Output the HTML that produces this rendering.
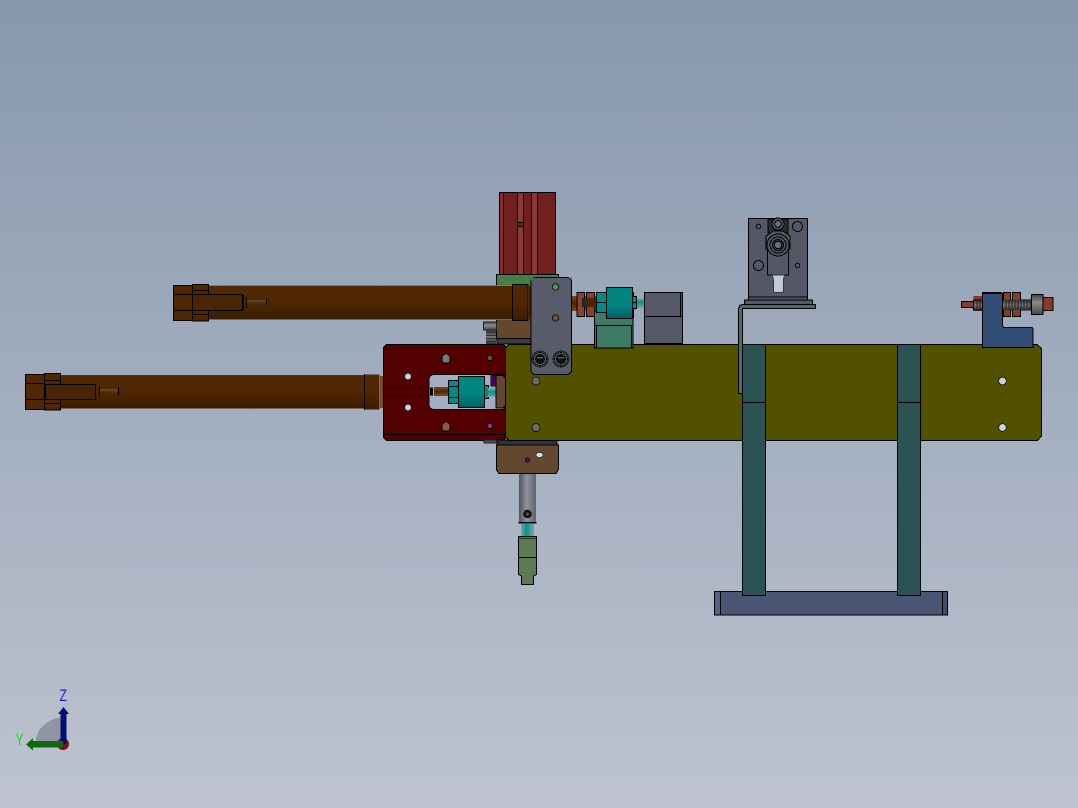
<!DOCTYPE html>
<html><head><meta charset="utf-8"><style>
html,body{margin:0;padding:0;width:1078px;height:808px;overflow:hidden}
svg{display:block}
</style></head><body>
<svg width="1078" height="808" viewBox="0 0 1078 808" xmlns="http://www.w3.org/2000/svg" shape-rendering="crispEdges">
<defs>
<linearGradient id="bg" x1="0" y1="0" x2="0" y2="1"><stop offset="0" stop-color="#8798ac"/><stop offset="0.5" stop-color="#a2aebf"/><stop offset="1" stop-color="#bec3cf"/></linearGradient>
<linearGradient id="tube" x1="0" y1="0" x2="0" y2="1"><stop offset="0" stop-color="#512801"/><stop offset="0.5" stop-color="#4f2702"/><stop offset="1" stop-color="#3b1d03"/></linearGradient>
<linearGradient id="rod" x1="0" y1="0" x2="0" y2="1"><stop offset="0" stop-color="#7d4a20"/><stop offset="0.5" stop-color="#4f2702"/><stop offset="1" stop-color="#7d4a20"/></linearGradient>
<linearGradient id="teal" x1="0" y1="0" x2="0" y2="1"><stop offset="0" stop-color="#008580"/><stop offset="0.55" stop-color="#008580"/><stop offset="1" stop-color="#005f66"/></linearGradient>
<linearGradient id="tealrod" x1="0" y1="0" x2="0" y2="1"><stop offset="0" stop-color="#7fb5b5"/><stop offset="0.4" stop-color="#089090"/><stop offset="1" stop-color="#6fa8a8"/></linearGradient>
<linearGradient id="tealv" x1="0" y1="0" x2="1" y2="0"><stop offset="0" stop-color="#6fa8a8"/><stop offset="0.4" stop-color="#089090"/><stop offset="1" stop-color="#6fa8a8"/></linearGradient>
<linearGradient id="steel" x1="0" y1="0" x2="1" y2="0"><stop offset="0" stop-color="#50525e"/><stop offset="0.45" stop-color="#8f939f"/><stop offset="1" stop-color="#5f626e"/></linearGradient>
<linearGradient id="thread" x1="0" y1="0" x2="0" y2="1"><stop offset="0" stop-color="#333"/><stop offset="0.5" stop-color="#777"/><stop offset="1" stop-color="#333"/></linearGradient>
<linearGradient id="cap" x1="0" y1="0" x2="0" y2="1"><stop offset="0" stop-color="#444"/><stop offset="0.4" stop-color="#8a8a8a"/><stop offset="1" stop-color="#444"/></linearGradient>
<linearGradient id="small" x1="0" y1="0" x2="0" y2="1"><stop offset="0" stop-color="#6b4a2a"/><stop offset="1" stop-color="#3f2208"/></linearGradient>
</defs>
<rect width="1078" height="808" fill="url(#bg)"/>

<g stroke="#000" stroke-width="1">
<!-- red pneumatic top -->
<rect x="499.500" y="192.500" width="56" height="82" fill="#721f1f"/>
<rect x="500" y="193" width="4" height="81" fill="#8c2a2a" stroke="none"/>
<rect x="517.500" y="193" width="6" height="81" fill="#8a3a36" stroke="none"/>
<rect x="531.500" y="193" width="6" height="81" fill="#8a3a36" stroke="none"/>
<line x1="503.500" y1="193" x2="503.500" y2="274"/>
<line x1="517.500" y1="193" x2="517.500" y2="274"/>
<line x1="523.500" y1="193" x2="523.500" y2="274"/>
<line x1="531.500" y1="193" x2="531.500" y2="274"/>
<line x1="537.500" y1="193" x2="537.500" y2="274"/>
<rect x="517.500" y="222.500" width="6" height="4" fill="#721f1f"/>

<!-- green block -->
<rect x="496.500" y="274.500" width="62" height="46" fill="#457f47"/>
<rect x="496.500" y="319" width="36" height="21" fill="#63472e" stroke="none"/>
<line x1="496.500" y1="319" x2="496.500" y2="340"/>
<rect x="497" y="338.500" width="36" height="5.500" fill="#3c3c3c"/>
<!-- screw -->
<rect x="483.500" y="322" width="13" height="8" fill="url(#cap)" stroke="#222"/>
<rect x="486" y="330" width="10" height="14" fill="url(#thread)" stroke="none"/>
<path d="M486 332.500h10M486 335.500h10M486 338.500h10M486 341.500h10" stroke="#333"/>

<!-- upper cylinder -->
<rect x="208" y="285.500" width="305" height="34" fill="url(#tube)" stroke="none"/>
<rect x="208" y="285" width="305" height="1" fill="#8a7565" stroke="none"/>
<rect x="208" y="319" width="305" height="1" fill="#7a6555" stroke="none"/>
<rect x="173.500" y="285.500" width="19" height="35" fill="#4f2702"/>
<line x1="173" y1="294.500" x2="192" y2="294.500"/><line x1="173" y1="310.500" x2="192" y2="310.500"/>
<rect x="192.500" y="284.500" width="16" height="36.500" fill="#4f2702"/>
<line x1="192" y1="290.500" x2="208" y2="290.500"/><line x1="192" y1="314.500" x2="208" y2="314.500"/>
<rect x="192.500" y="294.500" width="50" height="16" fill="#4a2504"/>
<line x1="243.500" y1="295" x2="243.500" y2="310"/>
<rect x="247" y="300" width="20" height="5" fill="url(#small)" stroke="none"/>
<line x1="246.500" y1="297" x2="246.500" y2="308"/><line x1="266.500" y1="299" x2="266.500" y2="305"/>

<!-- lower cylinder -->
<rect x="60" y="375" width="305" height="34" fill="url(#tube)" stroke="none"/>
<rect x="60" y="408" width="305" height="1" fill="#7a6555" stroke="none"/>
<rect x="25.500" y="374.500" width="19" height="35" fill="#4f2702"/>
<line x1="25" y1="383.500" x2="44" y2="383.500"/><line x1="25" y1="399.500" x2="44" y2="399.500"/>
<rect x="44.500" y="373.500" width="16" height="36.500" fill="#4f2702"/>
<line x1="44" y1="380.500" x2="60" y2="380.500"/><line x1="44" y1="403.500" x2="60" y2="403.500"/>
<rect x="45.500" y="384.500" width="50" height="15" fill="#4a2504"/>
<rect x="100" y="389" width="18" height="5" fill="url(#small)" stroke="none"/>
<line x1="99.500" y1="386" x2="99.500" y2="397"/><line x1="118.500" y1="388" x2="118.500" y2="395"/>
<rect x="364.500" y="374.500" width="15" height="35" fill="url(#tube)" stroke="none"/>
<line x1="364.500" y1="374" x2="364.500" y2="410"/>
<rect x="380" y="376" width="4" height="32" fill="#7a4c22" stroke="none"/>

<!-- collar upper -->
<rect x="512.500" y="284.500" width="15.500" height="36" fill="url(#tube)"/>
<rect x="528" y="286" width="4" height="33" fill="#4a2504" stroke="none"/>

<!-- rod right of plate -->
<rect x="572" y="296" width="36" height="15" fill="url(#rod)" stroke="none"/>
<rect x="577" y="292.500" width="7.500" height="24" fill="#8a4030"/>
<rect x="586.500" y="292.500" width="8" height="24" fill="#8a4030"/>
<rect x="582" y="298" width="4" height="9" fill="#222" stroke="none"/>
<rect x="585" y="298" width="11" height="9" fill="#4a2504" stroke="none"/>

<!-- grey block -->
<rect x="644.500" y="292.500" width="38" height="51" fill="#565a68"/>
<line x1="644" y1="316.500" x2="683" y2="316.500"/>
<line x1="680.500" y1="293" x2="680.500" y2="316"/>
<rect x="636" y="298" width="8" height="10" fill="url(#tealrod)" stroke="none"/>
</g>

<!-- red block -->
<path d="M386.500 344.500H503L508 348V436L503 440.500H386.500L383.500 437.500V347.500Z" fill="#520000" stroke="#000"/>
<line x1="384" y1="349.500" x2="506" y2="349.500" stroke="#000"/>
<line x1="384" y1="434.500" x2="506" y2="434.500" stroke="#000"/>
<line x1="384" y1="387.500" x2="430" y2="387.500" stroke="#000"/>
<line x1="384" y1="395.500" x2="430" y2="395.500" stroke="#000"/>
<!-- cutout -->
<path d="M434 374.500H504V409.500H434Q429 409.500 429 404V380Q429 374.500 434 374.500Z" fill="#a5aec0" stroke="#000"/>
<rect x="430" y="387.500" width="3" height="8" fill="#000"/>
<rect x="434" y="387" width="14" height="9" fill="url(#rod)"/>
<rect x="448.500" y="380.500" width="10" height="23" fill="#058a88" stroke="#000"/>
<line x1="448" y1="386.500" x2="458" y2="386.500" stroke="#000"/><line x1="448" y1="397.500" x2="458" y2="397.500" stroke="#000"/>
<rect x="458.500" y="376.500" width="26" height="31" fill="url(#teal)" stroke="#000"/>
<rect x="484.500" y="385.500" width="4" height="13" fill="#058a88" stroke="#000"/>
<rect x="488" y="388" width="8" height="9" fill="url(#tealrod)"/>
<rect x="490.500" y="375" width="6" height="11" fill="#4a0060" stroke="#000" stroke-width=".5"/>
<path d="M496 375.500h7l3 3V404l-3 4h-7Z" fill="#64472e" stroke="#000"/>
<g stroke="#000" stroke-width=".6">
<circle cx="408" cy="376.500" r="3.300" fill="#c8d2e0"/>
<circle cx="408" cy="407.500" r="3.300" fill="#c8d2e0"/>
<path d="M446 353.500l4 3v4l-1.500 2.500h-5l-1.500-2.500v-4z" fill="#777"/>
<path d="M446 421.500l4 3v4l-1.500 2.500h-5l-1.500-2.500v-4z" fill="#8a5a48"/>
<circle cx="490" cy="358" r="2.600" fill="#555"/>
<circle cx="490" cy="426" r="2.600" fill="#6a3fa0"/>
</g>

<!-- lower holder -->
<rect x="484" y="440" width="42" height="3" fill="#4a4a80" stroke="#222"/>
<rect x="497" y="440" width="60" height="5" fill="#333" stroke="#000"/>
<path d="M496.500 445H558.500V469L556 473.500H499L496.500 470Z" fill="#63472e" stroke="#000"/>
<ellipse cx="539.500" cy="455" rx="3.500" ry="2.500" fill="#d8dde6" stroke="#333" stroke-width=".6"/>
<circle cx="527.500" cy="460" r="2.400" fill="#4a0a50" stroke="#111" stroke-width=".6"/>
<rect x="519" y="474" width="17" height="48" fill="url(#steel)"/>
<rect x="518.500" y="522" width="18" height="1.500" fill="#000"/>
<circle cx="527.500" cy="514" r="4.300" fill="#111"/><circle cx="527.500" cy="514" r="1.500" fill="#555"/>
<rect x="521" y="524" width="13" height="13" fill="url(#tealv)"/>
<path d="M518.500 536.500H536.500V574.500L533.500 576V584.500H521.500V576L518.500 574.500Z" fill="#5b7c52" stroke="#000"/>
<line x1="518.500" y1="557.500" x2="536.500" y2="557.500" stroke="#000"/>
<line x1="518.500" y1="538.500" x2="536.500" y2="538.500" stroke="#2a3a2a" stroke-width=".6"/>

<!-- top assembly -->
<g stroke="#000" stroke-width="1">
<rect x="748.500" y="218.500" width="59" height="80" fill="#545766"/>
<rect x="744.500" y="300" width="68" height="4.500" fill="#545766"/>
<rect x="748.500" y="297" width="59" height="3" fill="#545766"/>
<rect x="768" y="219" width="20" height="14" fill="#2a2b33"/>
<circle cx="778" cy="224" r="6" fill="#545766"/><circle cx="778" cy="224" r="3.400" fill="#676a78"/>
<rect x="767.500" y="235" width="21" height="40" fill="#545766"/>
<path d="M773 231h10l7 5v13l-7 5h-10l-7-5v-13z" fill="#545766"/>
<circle cx="778" cy="245" r="11" fill="#545766"/><circle cx="778" cy="245" r="8" fill="#545766"/><circle cx="778" cy="245" r="5.500" fill="#3f4250"/><circle cx="778" cy="245" r="3.800" fill="#6a6d7b"/>
<path d="M772.500 275H784.500L783.500 279V291.500L782 292.500H775L773.500 291.500V279Z" fill="#c2cbdc" stroke="#333" stroke-width=".6"/>
<circle cx="758.500" cy="226.500" r="2.300" fill="none"/><circle cx="797.500" cy="226.500" r="5" fill="none"/>
<circle cx="758.500" cy="265.500" r="5" fill="none"/><circle cx="797.500" cy="265.500" r="2.300" fill="none"/>
</g>

<!-- yellow plate -->
<path d="M509 344.500H1037L1041.500 348.500V436L1037.500 440.500H509L505.500 437V348Z" fill="#525100" stroke="#000"/>

<!-- L bracket -->
<path d="M738.500 393.500V310Q738.500 304.500 743 304.500H815.500V308.500H742.500V393.500Z" fill="#4f6a6c" stroke="#000"/>

<!-- green housing + teal -->
<g stroke="#000">
<rect x="594.500" y="311" width="38.500" height="37" fill="#3f7a68"/>
<line x1="594.500" y1="325.500" x2="633" y2="325.500"/>
<line x1="596.500" y1="326" x2="596.500" y2="348"/><line x1="631.500" y1="326" x2="631.500" y2="348"/>
<rect x="596.500" y="292.500" width="10" height="20" fill="#058a88"/>
<line x1="597" y1="302.500" x2="606" y2="302.500"/>
<rect x="606.500" y="287.500" width="26" height="31" fill="url(#teal)"/>
<line x1="633.500" y1="292" x2="633.500" y2="318"/>
<rect x="632.500" y="296.500" width="4" height="12" fill="#058a88"/>
<line x1="632.500" y1="302.500" x2="636.500" y2="302.500"/>
</g>

<!-- right stud assembly -->
<g stroke="#000">
<rect x="961.500" y="301.500" width="12" height="6" fill="#8a3a28"/>
<rect x="973.500" y="296" width="9" height="15" fill="#8a3a28" stroke="none"/>
<rect x="973.500" y="300" width="60" height="10" fill="url(#thread)" stroke="#000"/>
<rect x="1003.500" y="292.500" width="7" height="24" fill="#8a3a28"/>
<rect x="1012.500" y="292.500" width="8" height="24" fill="#8a3a28"/>
<rect x="1003" y="300" width="28" height="10" fill="url(#thread)" stroke="none"/>
<path d="M1006 300v10M1009 300v10M1012 300v10M1015 300v10M1018 300v10M1021 300v10M1024 300v10M1027 300v10M1030 300v10M977 300v10M980 300v10" stroke="#222" stroke-width=".6"/>
<rect x="1043" y="297.500" width="10" height="13" fill="#8a3a28"/>
<rect x="1031.500" y="294.500" width="11.500" height="20" fill="url(#cap)"/>
<path d="M982.500 293.500H1002.500V326L1004 327.500H1032L1033 329V347.500H982.500Z" fill="#324d76"/>
<line x1="982" y1="292.500" x2="1002" y2="292.500" stroke-width="1"/>
</g>

<!-- grey plate over -->
<path d="M533.500 277.500H568.500L571.500 280.500V371.500L568.500 374.500H534L531 371.500V280Z" fill="#585b69" stroke="#000"/>
<path d="M531 277.500h4l-4 3z M572 277.500h-4l4 3z" fill="#8a5a30"/>
<g stroke="#000" stroke-width=".7">
<circle cx="555.500" cy="287" r="3.200" fill="#4f9a50"/>
<circle cx="555.500" cy="318" r="3.200" fill="#70563e"/>
<g fill="none"><circle cx="540" cy="359" r="8"/><circle cx="540" cy="359" r="6.500"/><circle cx="561" cy="359" r="8"/><circle cx="561" cy="359" r="6.500"/></g>
<circle cx="540" cy="359" r="4.600" fill="#111"/><circle cx="561" cy="359" r="4.600" fill="#111"/>
<path d="M537 357h6v1.500h-6zM558 357h6v1.500h-6z" fill="#5c5c30" stroke="none"/>
<circle cx="536" cy="381" r="4" fill="#6a6a6a"/>
<circle cx="536" cy="427.500" r="4" fill="#6a6a6a"/>
<circle cx="1002.500" cy="381" r="3.800" fill="#c8d2e0"/>
<circle cx="1002.500" cy="427.500" r="3.800" fill="#c8d2e0"/>
</g>

<!-- base + legs -->
<g stroke="#000">
<rect x="714.500" y="591.500" width="233" height="23.500" fill="#4a5674"/>
<rect x="714.500" y="591.500" width="6" height="23.500" fill="#56628a"/>
<rect x="942.500" y="591.500" width="5" height="23.500" fill="#434d69"/>
<rect x="742.500" y="344.500" width="23" height="251" fill="#2c5353"/>
<rect x="897.500" y="344.500" width="23" height="251" fill="#2c5353"/>
<line x1="742" y1="402.500" x2="766" y2="402.500"/>
<line x1="897" y1="402.500" x2="921" y2="402.500"/>
</g>

<!-- triad -->
<g shape-rendering="auto">
<path d="M35.500 741Q38 722 61 717V741Z" fill="#8f95a2"/>
<circle cx="63" cy="744" r="6" fill="#7e1018"/>
<rect x="60.500" y="713" width="6" height="31" fill="#000e78"/>
<path d="M58 714L63.500 707L69 714Z" fill="#000e78"/>
<rect x="33" y="741" width="30" height="6.500" fill="#0e6a12"/>
<path d="M33 738L26 744.500L33 750.500Z" fill="#0e6a12"/>
<text transform="translate(59.500 701) scale(.72 1)" font-family="'Liberation Sans',sans-serif" font-size="17" fill="#1a1ae8">Z</text>
<text transform="translate(15.500 745) scale(.72 1)" font-family="'Liberation Sans',sans-serif" font-size="17" fill="#10e010">Y</text>
</g>
</svg>
</body></html>
